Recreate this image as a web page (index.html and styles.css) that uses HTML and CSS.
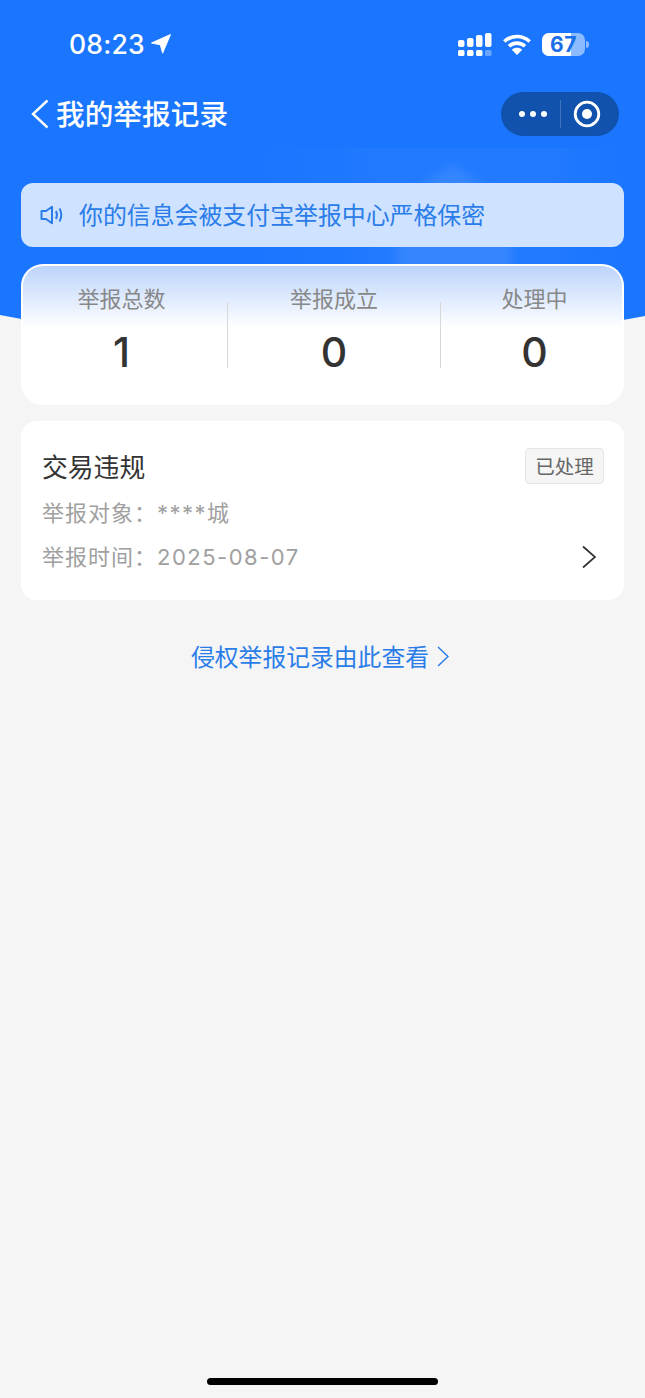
FILE: index.html
```html
<!DOCTYPE html>
<html lang="zh-CN">
<head>
<meta charset="utf-8">
<title>我的举报记录</title>
<link rel="stylesheet" href="styles.css">
</head>
<body>
<div class="page">
  <svg class="hero" width="645" height="345" viewBox="0 0 645 345" aria-hidden="true">
    <defs>
      <linearGradient id="band" x1="0" y1="0" x2="1" y2="0">
        <stop offset="0" stop-color="#2a7fff" stop-opacity="0"/>
        <stop offset=".35" stop-color="#2a7fff" stop-opacity=".45"/>
        <stop offset=".8" stop-color="#2a7fff" stop-opacity=".45"/>
        <stop offset="1" stop-color="#2a7fff" stop-opacity="0"/>
      </linearGradient>
      <filter id="soft" x="-20%" y="-20%" width="140%" height="140%"><feGaussianBlur stdDeviation="5"/></filter>
    </defs>
    <path class="hero-blue" d="M0 0H645V316Q322 378 0 315Z"/>
    <path fill="url(#band)" d="M262 148H620V320H262Z"/>
    <path fill="#3585ff" filter="url(#soft)" d="M396 270V205L452 164L512 205V270Z"/>
  </svg>

  <div class="status">
    <div class="status-left">
      <span class="time">08:23</span>
      <svg class="arrow" width="22" height="22" viewBox="0 0 22 22"><path fill="#fff" stroke="#fff" stroke-width="1" stroke-linejoin="round" d="M20.500 1.500 12.600 20.200 10.400 11.800 1.500 10Z"/></svg>
    </div>
    <div class="status-right">
      <svg width="34" height="23" viewBox="0 0 34 23" fill="#fff">
        <rect x="0" y="7" width="6.500" height="7" rx="2"/><rect x="9" y="5" width="6.500" height="9" rx="2"/><rect x="18" y="2" width="6.500" height="12" rx="2"/><rect x="27" y="0" width="6.500" height="14" rx="2"/>
        <rect x="0" y="17" width="6.500" height="6" rx="1.500"/><rect x="9" y="17" width="6.500" height="6" rx="1.500"/><rect x="18" y="17" width="6.500" height="6" rx="1.500"/><rect x="27" y="17" width="6.500" height="6" rx="1.500" opacity=".35"/>
      </svg>
      <svg width="28" height="21" viewBox="0 0 28 21" fill="none" stroke="#fff" stroke-width="3.600">
        <path d="M1.300 7.500C8.500 .8 19.500 .8 26.700 7.500"/><path d="M6 12.300C10.500 8 17.500 8 22 12.300"/><path fill="#fff" stroke="none" d="M14 21 8.800 15.800C12 13.200 16 13.200 19.200 15.800Z"/>
      </svg>
      <div class="battery">
        <div class="battery-body"><span class="battery-fill"></span><span class="battery-num">67</span></div>
        <span class="battery-tip"></span>
      </div>
    </div>
  </div>

  <div class="nav">
    <div class="nav-title">
      <svg width="18" height="30" viewBox="0 0 18 30" fill="none"><path d="M16.500 1.500 2 15 16.500 28.500" stroke="#fff" stroke-width="2.400"/></svg>
      <span class="nav-text">我的举报记录</span>
    </div>
    <div class="capsule">
      <span class="dots"><i></i><i></i><i></i></span>
      <span class="capsule-sep"></span>
      <svg width="28" height="28" viewBox="0 0 28 28"><circle cx="14" cy="14" r="11.800" fill="none" stroke="#fff" stroke-width="2.800"/><circle cx="14" cy="14" r="5" fill="#fff"/></svg>
    </div>
  </div>

  <main class="content">
    <div class="notice">
      <svg width="24" height="20" viewBox="0 0 24 20" fill="none" stroke="#2a7de9" stroke-width="2"><path stroke-linejoin="round" d="M1.500 6H6L12 1.800V18.200L6 14H1.500Z"/><path d="M16 6C17.200 8.500 17.200 11.500 16 14"/><path d="M19.500 3.500C21.700 7.500 21.700 12.500 19.500 16.500"/></svg>
      <span class="notice-text">你的信息会被支付宝举报中心严格保密</span>
    </div>

    <section class="stats">
      <div class="stat stat-first"><div class="stat-label">举报总数</div><div class="stat-value">1</div></div>
      <span class="stat-sep"></span>
      <div class="stat stat-mid"><div class="stat-label">举报成立</div><div class="stat-value">0</div></div>
      <span class="stat-sep"></span>
      <div class="stat stat-last"><div class="stat-label">处理中</div><div class="stat-value">0</div></div>
    </section>

    <section class="record">
      <div class="record-head">
        <h2 class="record-title">交易违规</h2>
        <span class="tag">已处理</span>
      </div>
      <div class="record-line">举报对象：<span class="record-val">****城</span></div>
      <div class="record-foot">
        <div class="record-line">举报时间：<span class="record-val">2025-08-07</span></div>
        <svg class="record-chevron" width="16" height="24" viewBox="0 0 16 24" fill="none"><path d="M2 1.500 14 12 2 22.500" stroke="#333" stroke-width="1.700"/></svg>
      </div>
    </section>

    <a class="more">
      <span>侵权举报记录由此查看</span>
      <svg width="12" height="21" viewBox="0 0 12 21" fill="none"><path d="M1 1 11 10.500 1 20" stroke="#2a7de9" stroke-width="1.500"/></svg>
    </a>
  </main>

  <div class="home-bar"></div>
</div>
</body>
</html>
```
FILE: styles.css
```css
* { box-sizing: border-box; }
html, body { margin: 0; padding: 0; }
body { background: #f5f5f5; font-family: "Noto Sans CJK SC", "Noto Sans", sans-serif; }
.page { position: relative; width: 645px; height: 1398px; overflow: hidden; background: #f5f5f5; }
.hero { position: absolute; left: 0; top: 0; }
.hero-blue { fill: #1a76ff; }

.status { position: relative; height: 88px; display: flex; justify-content: space-between; align-items: center; padding: 0 56px 0 69px; }
.status-left { display: flex; align-items: center; gap: 5px; }
.time { font: 500 26.500px/1 Inter, sans-serif; color: #fff; letter-spacing: .2px; }
.status-right { display: flex; align-items: center; gap: 11px; }
.battery { display: flex; align-items: center; gap: 1px; }
.battery-body { position: relative; width: 43px; height: 23px; border-radius: 7px; background: rgba(255,255,255,.5); overflow: hidden; text-align: center; }
.battery-fill { position: absolute; left: 0; top: 0; bottom: 0; width: 29px; background: #fff; }
.battery-num { position: relative; display: block; font: 700 21px/23px Inter, sans-serif; color: #1a6fe8; letter-spacing: .5px; }
.battery-tip { width: 3px; height: 7px; border-radius: 0 3px 3px 0; background: rgba(255,255,255,.5); }

.nav { position: relative; height: 52px; display: flex; justify-content: space-between; align-items: center; padding: 0 26px 0 31px; }
.nav-title { display: flex; align-items: center; gap: 7px; color: #fff; font-size: 28.700px; font-weight: 500; line-height: 1; }
.nav-text { padding-bottom: 2px; }
.capsule { width: 118px; height: 44px; border-radius: 22px; background: #1052ad; display: flex; align-items: center; padding: 0 18px; }
.dots { display: flex; gap: 5px; width: 41px; }
.dots i { width: 6px; height: 6px; border-radius: 50%; background: #fff; }
.capsule-sep { width: 1px; height: 28px; background: rgba(255,255,255,.2); margin-right: 12px; }

.content { position: relative; padding: 43px 21px 0; }
.notice { height: 64px; border-radius: 12px; background: #cfe2ff; display: flex; align-items: center; gap: 15px; padding: 0 19px; color: #2a7de9; font-size: 23.900px; line-height: 1; }
.notice-text { padding-bottom: 2px; }
.stats { margin-top: 17px; height: 141px; border-radius: 22px; border: 2px solid #fff; border-bottom: 0; background: linear-gradient(180deg, #bcd4fb 0, #fff 62px); display: flex; padding-top: 18px; }
.stat { text-align: center; }
.stat-first { width: 204px; padding-right: 7px; }
.stat-mid { width: 212px; }
.stat-last { flex: 1; padding-left: 6px; }
.stat-sep { width: 1px; height: 66px; margin-top: 18px; background: #d8d8d8; }
.stat-label { font-size: 22px; line-height: 26px; color: #888; }
.stat-value { margin-top: 20px; font: 500 41px/44px Inter, "Liberation Sans", sans-serif; color: #333; }

.record { margin-top: 16px; height: 179px; border-radius: 16px; background: #fff; padding: 27px 20px 0 21px; }
.record-head { display: flex; justify-content: space-between; align-items: flex-start; height: 41px; }
.record-title { margin: 0; font-size: 25.800px; line-height: 36px; font-weight: 400; color: #333; }
.tag { height: 36px; width: 79px; text-align: center; border: 1px solid #e6e6e6; border-radius: 4px; background: #f5f5f5; color: #666; font-size: 19.500px; line-height: 33px; }
.record-line { height: 44px; font-size: 22px; line-height: 44px; letter-spacing: 1px; color: #a0a0a0; }
.record-val { font-family: Inter, "Noto Sans CJK SC", sans-serif; letter-spacing: 1.500px; line-height: 1; }
.record-foot { display: flex; justify-content: space-between; align-items: center; padding-right: 7px; }
.record-chevron { margin-top: 4px; }

.more { margin-top: 38px; padding-right: 5px; display: flex; justify-content: center; align-items: center; gap: 8px; color: #2a7de9; font-size: 23.800px; line-height: 36px; }
.home-bar { position: absolute; left: 207px; bottom: 13px; width: 231px; height: 7.500px; border-radius: 4px; background: #000; }
```
